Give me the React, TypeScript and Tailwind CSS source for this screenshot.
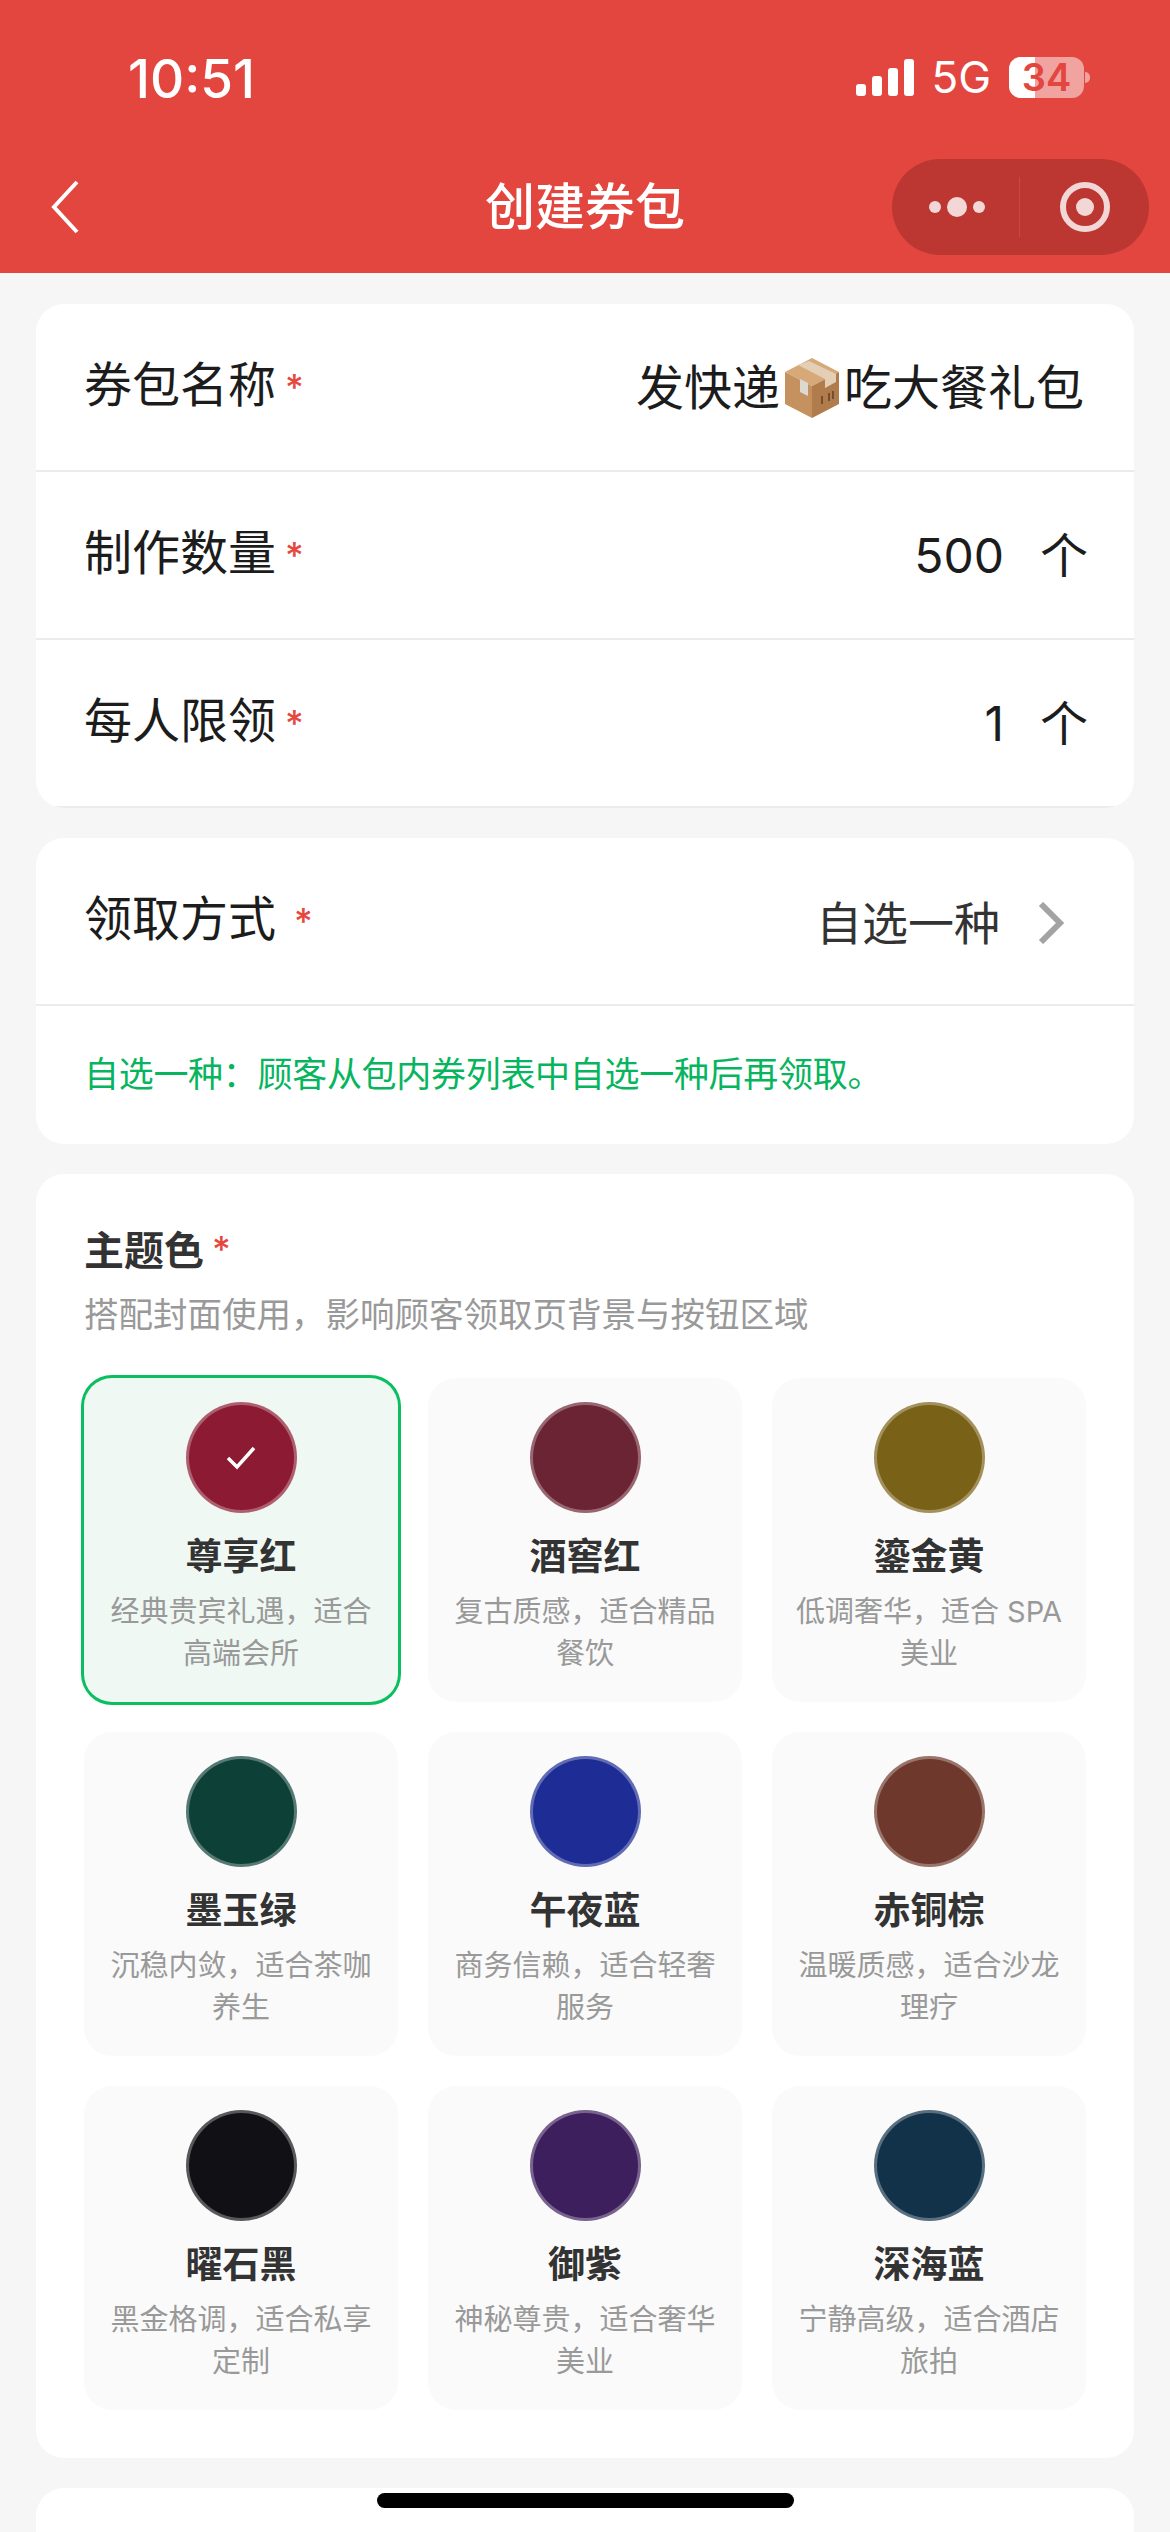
const themes = [
  { name: "尊享红", desc: "经典贵宾礼遇，适合高端会所", color: "bg-[#8b1a32]", selected: true },
  { name: "酒窖红", desc: "复古质感，适合精品餐饮", color: "bg-[#6b2433]" },
  { name: "鎏金黄", desc: "低调奢华，适合 SPA 美业", color: "bg-[#7a6118]" },
  { name: "墨玉绿", desc: "沉稳内敛，适合茶咖养生", color: "bg-[#0d4037]" },
  { name: "午夜蓝", desc: "商务信赖，适合轻奢服务", color: "bg-[#1e2d96]" },
  { name: "赤铜棕", desc: "温暖质感，适合沙龙理疗", color: "bg-[#6e392c]" },
  { name: "曜石黑", desc: "黑金格调，适合私享定制", color: "bg-[#111115]" },
  { name: "御紫", desc: "神秘尊贵，适合奢华美业", color: "bg-[#3e1f5e]" },
  { name: "深海蓝", desc: "宁静高级，适合酒店旅拍", color: "bg-[#12324a]" },
];

const Star = () => (
  <span className="ml-[9px] text-[36px] leading-none font-medium text-[#e5483f] relative top-[2px]">*</span>
);

const PackageEmoji = () => (
  <svg viewBox="0 0 56 60" className="w-[56px] h-[60px] mx-[4px] shrink-0">
    <polygon points="28,0 55,14 28,28 1,14" fill="#d7a878" />
    <polygon points="1,14 28,28 28,60 1,46" fill="#c4915f" />
    <polygon points="55,14 28,28 28,60 55,46" fill="#b07c4c" />
    <polygon points="14,7 41,21 41,30 52,24 52,16 25,3" fill="#e2cfb6" />
    <polygon points="16,21 24,25 24,38 16,34" fill="#dcd9d3" />
    <path d="M38 38v8M45 35v8M49 33v8" stroke="#5e3f26" strokeWidth="1.5" />
  </svg>
);

const Row = ({ label, children }: { label: string; children: React.ReactNode }) => (
  <div className="h-[168px] pl-[48px] pr-[50px] flex items-center justify-between border-b-2 border-[#ebebeb]">
    <div className="flex items-center text-[48px] leading-none text-[#1c1c1c] relative top-[-2px]">
      {label}
      <Star />
    </div>
    <div className="flex items-center text-[48px] leading-none text-[#1c1c1c] relative top-[1px]">{children}</div>
  </div>
);

const ThemeTile = ({
  name,
  desc,
  color,
  selected,
}: {
  name: string;
  desc: string;
  color: string;
  selected?: boolean;
}) => (
  <div
    className={`h-[324px] rounded-[28px] pt-[24px] px-[18px] flex flex-col items-center text-center ${
      selected ? "bg-[#eff8f3] ring-[3px] ring-[#0abf60]" : "bg-[#fafafa]"
    }`}
  >
    <div
      className={`w-[111px] h-[111px] rounded-full border-[3px] border-white/30 flex items-center justify-center shrink-0 ${color}`}
    >
      {selected && (
        <svg viewBox="0 0 30 24" className="w-[30px] h-[24px]">
          <path d="M2 12l9 9L28 2" fill="none" stroke="#fff" strokeWidth="3.5" />
        </svg>
      )}
    </div>
    <div className="mt-[22px] text-[37px] leading-[44px] font-bold text-[#333]">{name}</div>
    <div className="mt-[12px] text-[29px] leading-[42px] text-[#999]">{desc}</div>
  </div>
);

export default function App() {
  return (
    <div className="relative h-[2532px] overflow-hidden bg-[#f6f6f6] font-['Inter','Noto_Sans_CJK_SC',sans-serif]">
      <header className="h-[273px] bg-[#e3463f] text-white">
        <div className="h-[159px] pl-[128px] pr-[80px] pt-[50px] flex items-start justify-between">
          <span className="text-[53px] leading-[58px] font-medium">10:51</span>
          <div className="flex items-center h-[58px] mt-[-2px]">
            <svg viewBox="0 0 58 37" className="w-[58px] h-[37px]">
              <rect x="0" y="25" width="10" height="12" rx="3" fill="#fff" />
              <rect x="16" y="17" width="10" height="20" rx="3" fill="#fff" />
              <rect x="32" y="9" width="10" height="28" rx="3" fill="#fff" />
              <rect x="48" y="0" width="10" height="37" rx="3" fill="#fff" />
            </svg>
            <span className="ml-[17px] text-[44px] leading-none font-normal">5G</span>
            <div className="ml-[18px] flex items-center">
              <div className="relative w-[75px] h-[41px] rounded-[12px] bg-white/50 flex items-center justify-center">
                <div className="absolute left-0 top-0 bottom-0 w-[26px] rounded-l-[12px] bg-white" />
                <span className="relative text-[38px] leading-[41px] font-semibold text-[#e3463f]">34</span>
              </div>
              <div className="ml-[1px] w-[5px] h-[11px] rounded-r-full bg-white/50" />
            </div>
          </div>
        </div>
        <div className="grid grid-cols-[1fr_auto_1fr] items-center h-[96px] px-[21px]">
          <svg viewBox="0 0 30 54" className="ml-[29px] w-[30px] h-[54px]" fill="none">
            <path d="M27 2L4 27l23 25" stroke="#fff" strokeWidth="4" />
          </svg>
          <h1 className="text-[50px] leading-none font-medium">创建券包</h1>
          <div className="justify-self-end w-[257px] h-[96px] rounded-full bg-[#bc3731] flex items-center">
            <div className="w-[128px] h-[60px] border-r border-white/10 flex items-center justify-center gap-[6px] pl-[2px]">
              <span className="w-[12px] h-[12px] rounded-full bg-white/80" />
              <span className="w-[20px] h-[20px] rounded-full bg-white/80" />
              <span className="w-[12px] h-[12px] rounded-full bg-white/80" />
            </div>
            <div className="flex-1 flex items-center justify-center">
              <div className="w-[50px] h-[50px] rounded-full border-[6px] border-white/80 flex items-center justify-center">
                <span className="w-[18px] h-[18px] rounded-full bg-white/80" />
              </div>
            </div>
          </div>
        </div>
      </header>

      <main className="px-[36px] pt-[31px] flex flex-col gap-[30px]">
        <section className="bg-white rounded-[28px] h-[504px] overflow-hidden">
          <Row label="券包名称">
            发快递
            <PackageEmoji />
            吃大餐礼包
          </Row>
          <Row label="制作数量">
            500
            <span className="ml-[36px] mr-[-4px]">个</span>
          </Row>
          <Row label="每人限领">
            1
            <span className="ml-[36px] mr-[-4px]">个</span>
          </Row>
        </section>

        <section className="bg-white rounded-[28px] h-[306px] overflow-hidden">
          <div className="h-[168px] pl-[48px] pr-[70px] flex items-center justify-between border-b-2 border-[#ebebeb]">
            <div className="flex items-center text-[48px] leading-none text-[#1c1c1c] relative top-[-2px]">
              领取方式
              <span className="ml-[18px] text-[36px] leading-none font-medium text-[#e5483f] relative top-[2px]">*</span>
            </div>
            <div className="flex items-center text-[46px] leading-none text-[#333] relative top-[2px]">
              自选一种
              <svg viewBox="0 0 26 42" className="ml-[38px] w-[26px] h-[42px]" fill="none">
                <path d="M3 2l19 19L3 40" stroke="#a3a3a3" strokeWidth="6" />
              </svg>
            </div>
          </div>
          <p className="pl-[48px] pt-[45px] text-[35px] leading-[46px] tracking-[-0.3px] text-[#07b55e]">
            自选一种：顾客从包内券列表中自选一种后再领取。
          </p>
        </section>

        <section className="bg-white rounded-[28px] px-[48px] pt-[50px] pb-[48px]">
          <div className="flex items-center text-[40px] leading-[54px] font-semibold text-[#333]">
            主题色
            <span className="ml-[8px] text-[36px] leading-none font-medium text-[#e5483f] relative top-[-2px]">*</span>
          </div>
          <p className="mt-[14px] text-[34.5px] leading-[46px] text-[#999]">
            搭配封面使用，影响顾客领取页背景与按钮区域
          </p>
          <div className="mt-[40px] grid grid-cols-3 gap-[30px]">
            {themes.map((theme) => (
              <ThemeTile key={theme.name} {...theme} />
            ))}
          </div>
        </section>

        <section className="bg-white rounded-[28px] h-[300px]" />
      </main>

      <div className="absolute left-[377px] top-[2493px] w-[417px] h-[15px] rounded-full bg-black" />
    </div>
  );
}
